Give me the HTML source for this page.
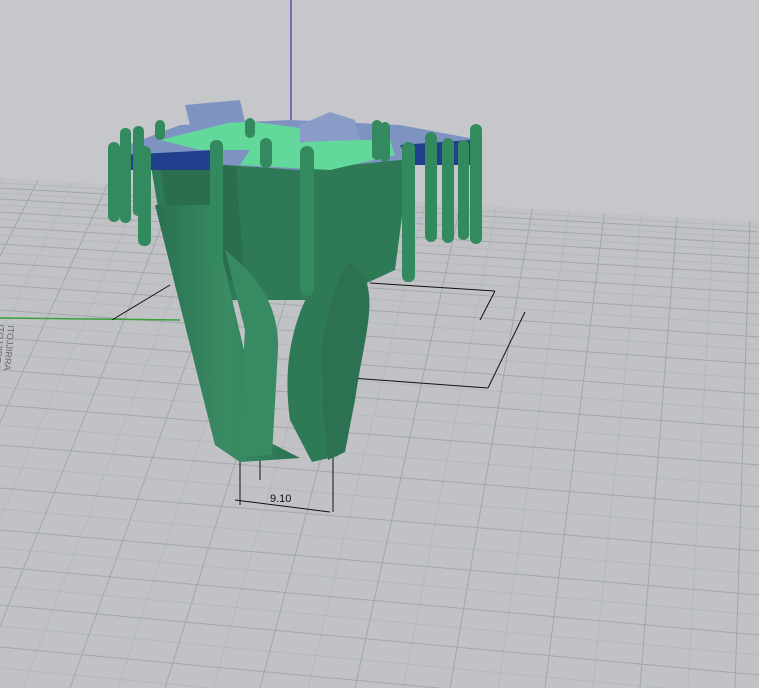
<!DOCTYPE html>
<html><head><style>html,body{margin:0;padding:0;background:#c4c6ca;overflow:hidden;width:759px;height:688px}svg{display:block;position:absolute;left:0;top:0}</style></head>
<body>
<svg width="759" height="688" viewBox="0 0 759 688" xmlns="http://www.w3.org/2000/svg" overflow="hidden">
<defs>
<linearGradient id="shank" x1="0" y1="0" x2="1" y2="0"><stop offset="0" stop-color="#2a7050"/><stop offset=".5" stop-color="#3a8c64"/><stop offset="1" stop-color="#2a7050"/></linearGradient>
<clipPath id="gc"><polygon points="0,178 759,222 759,688 0,688"/></clipPath>
</defs>
<rect width="759" height="688" fill="#c5c7cb"/>
<polygon points="0,178 759,222 759,688 0,688" fill="#c0c2c6"/>
<g clip-path="url(#gc)" fill="none">
<g stroke="#b5b8bc" stroke-width="1">
<path d="M0 183L759 227M0 193L759 238M0 205L759 251M0 219L759 266M0 235L759 283M0 253L759 303M0 274L759 325M0 297L759 350M0 324L759 379M0 354L759 411M0 387L759 446M0 425L759 486M0 466L759 529M0 509L759 574M0 548L759 615M0 586L759 655M0 626L759 697M0 668L759 740"/>
<path d="M800 -1350L-357 688M800 -1350L-262 688M800 -1350L-167 688M800 -1350L-72 688M800 -1350L23 688M800 -1350L118 688M800 -1350L213 688M800 -1350L308 688M800 -1350L403 688M800 -1350L498 688M800 -1350L593 688M800 -1350L688 688M800 -1350L783 688"/>
</g>
<g stroke="#a3a6ab" stroke-width="1">
<path d="M0 188L759 232M0 199L759 244M0 212L759 258M0 227L759 274M0 244L759 293M0 263L759 314M0 285L759 337M0 310L759 364M0 338L759 394M0 370L759 428M0 405L759 465M0 445L759 507M0 488L759 551M0 530L759 595M0 567L759 635M0 605L759 675M0 647L759 718"/>
<path d="M800 -1350L-405 688M800 -1350L-310 688M800 -1350L-215 688M800 -1350L-120 688M800 -1350L-25 688M800 -1350L70 688M800 -1350L165 688M800 -1350L260 688M800 -1350L355 688M800 -1350L450 688M800 -1350L545 688M800 -1350L640 688M800 -1350L735 688M800 -1350L830 688"/>
</g>
</g>
<g transform="translate(8,325) rotate(95)" font-family="Liberation Sans,sans-serif" font-size="9" fill="#666">
<text x="0" y="0">ITOJJIRRA</text><text x="0" y="10">ITOJJIRRA</text><text x="30" y="22">OR</text>
</g>
<line x1="291" y1="0" x2="291" y2="125" stroke="#5a4fb0" stroke-width="1.5"/>
<line x1="0" y1="318" x2="180" y2="320" stroke="#3aa03a" stroke-width="1.5"/>
<g stroke="#111" stroke-width="1" fill="none">
<path d="M112 320L170 285M370 283L495 291M495 291L480 320M310 375L488 388M488 388L525 312M372 195L405 175M372 195L372 275M235 500L330 512M240 450V505M260 440V480M333 455V512"/>
</g>
<text x="270" y="502" font-family="Liberation Sans,sans-serif" font-size="11" fill="#111">9.10</text>
<polygon points="150,160 410,155 395,270 330,300 230,300 160,220" fill="#2f7a56"/>
<polygon points="160,160 235,150 245,290 170,240" fill="#2a6e4e"/>
<polygon points="115,150 180,125 290,120 400,125 480,140 470,165 400,160 300,170 150,160" fill="#7f93c2"/>
<polygon points="160,140 240,120 300,128 300,150 200,150" fill="#62d99b"/>
<polygon points="250,150 320,140 390,140 395,155 330,170 240,165" fill="#62d99b"/>
<polygon points="185,105 240,100 245,122 190,125" fill="#7f93c2"/>
<polygon points="300,125 330,112 355,120 360,140 300,142" fill="#8a9cc8"/>
<polygon points="120,155 215,150 215,170 130,170" fill="#203f8c"/>
<polygon points="400,145 470,140 470,165 410,165" fill="#203f8c"/>
<path d="M155 205 L210 205 L265 440 L300 458 L240 462 L215 445 Z" fill="url(#shank)"/>
<path d="M225 250 C250 270 280 300 278 350 L272 455 L238 458 L245 330 Z" fill="#378a62"/>
<path d="M340 250 C300 290 280 350 290 420 L312 462 L338 456 L322 400 C318 340 332 300 348 270 Z" fill="#2f7a56"/>
<path d="M348 262 C385 280 365 330 355 400 L345 452 L328 460 L322 400 C318 330 332 290 348 262 Z" fill="#2c7252"/>
<g fill="#338a5f">
<rect x="108" y="142" width="12" height="80" rx="6"/><rect x="120" y="128" width="11" height="95" rx="5"/><rect x="133" y="126" width="11" height="90" rx="5"/>
<rect x="138" y="146" width="13" height="100" rx="6"/><rect x="210" y="140" width="13" height="130" rx="6"/>
<rect x="300" y="146" width="14" height="150" rx="7"/><rect x="402" y="142" width="13" height="140" rx="6"/>
<rect x="425" y="132" width="12" height="110" rx="6"/><rect x="442" y="138" width="12" height="105" rx="6"/>
<rect x="458" y="140" width="11" height="100" rx="5"/><rect x="470" y="124" width="12" height="120" rx="6"/>
<rect x="260" y="138" width="12" height="30" rx="6"/><rect x="372" y="120" width="10" height="40" rx="5"/><rect x="380" y="122" width="10" height="40" rx="5"/>
<rect x="155" y="120" width="10" height="20" rx="5"/><rect x="245" y="118" width="10" height="20" rx="5"/>
</g>
</svg>
</body></html>
